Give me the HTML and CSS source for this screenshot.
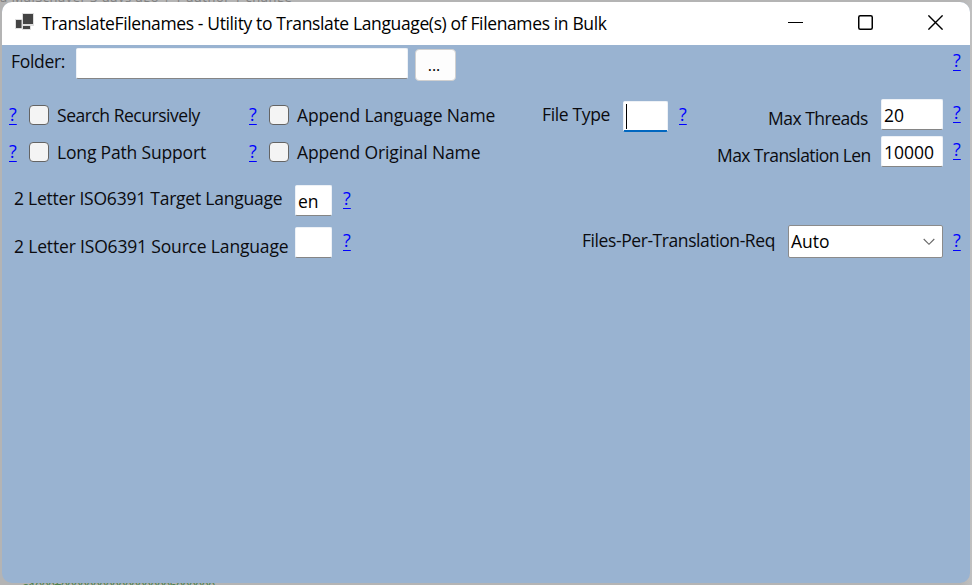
FILE: index.html
```html
<!DOCTYPE html>
<html lang="en">
<head>
<meta charset="utf-8">
<title>TranslateFilenames</title>
<link rel="stylesheet" href="styles.css">
</head>
<body>
<div class="behind behind-top">a MalSchaver 3 days ago | 1 author 1 change</div>
<div class="behind behind-bottom">a1000f00000000000000000b000000</div>
<div class="window">
  <header class="titlebar">
    <svg class="app-icon" width="20" height="18" viewBox="0 0 20 18"><path fill="#dedede" d="M7 0h12v13h-3v4H7v-1H0V6h7z"/><path fill="#444" d="M8 1h10v10H8zM1 7h5.5v8H1zM8 13h7v3H8z"/></svg>
    <h1 class="title">TranslateFilenames - Utility to Translate Language(s) of Filenames in Bulk</h1>
    <div class="controls">
      <svg width="15" height="15" viewBox="0 0 15 15"><path d="M0 7.5h15"/></svg>
      <svg width="15" height="15" viewBox="0 0 15 15"><rect x=".75" y=".75" width="13.5" height="13.5" rx="1.5" stroke-width="1.5"/></svg>
      <svg width="15" height="15" viewBox="0 0 15 15"><path stroke-width="1.4" d="M.4.4l14.2 14.2M14.6.4L.4 14.6"/></svg>
    </div>
  </header>
  <main class="form">
    <div class="row row-folder">
      <label class="label folder-label">Folder:</label>
      <div class="field folder-input"></div>
      <button class="browse">...</button>
      <a class="help" href="#">?</a>
    </div>
    <div class="row row-options">
      <div class="options">
        <a class="help" href="#">?</a><span class="check"></span><label class="label search">Search Recursively</label>
        <a class="help" href="#">?</a><span class="check"></span><label class="label append-lang">Append Language Name</label>
        <a class="help" href="#">?</a><span class="check"></span><label class="label long-path">Long Path Support</label>
        <a class="help" href="#">?</a><span class="check"></span><label class="label append-orig">Append Original Name</label>
      </div>
      <div class="filetype">
        <label class="label filetype-label">File Type</label>
        <div class="field focused"><span class="caret"></span></div>
        <a class="help" href="#">?</a>
      </div>
      <div class="limits">
        <label class="label threads">Max Threads</label><div class="field">20</div><a class="help" href="#">?</a>
        <label class="label length">Max Translation Len</label><div class="field">10000</div><a class="help" href="#">?</a>
      </div>
    </div>
    <div class="row row-target">
      <label class="label target-label">2 Letter ISO6391 Target Language</label>
      <div class="field lang-input">en</div>
      <a class="help" href="#">?</a>
    </div>
    <div class="row row-source">
      <label class="label source-label">2 Letter ISO6391 Source Language</label>
      <div class="field lang-input"></div>
      <a class="help" href="#">?</a>
      <div class="batch">
        <label class="label batch-label">Files-Per-Translation-Req</label>
        <div class="select">Auto<svg width="12" height="8" viewBox="0 0 12 8"><path d="M.7 1l5.3 5.3L11.3 1"/></svg></div>
        <a class="help" href="#">?</a>
      </div>
    </div>
  </main>
</div>
</body>
</html>
```
FILE: styles.css
```css
* { box-sizing: border-box; }

body {
  margin: 0;
  height: 585px;
  overflow: hidden;
  padding: 2px;
  background: linear-gradient(90deg, #b4b4b4 0 960px, #c0c0c0 972px);
  font: 17.5px/24px "Open Sans", "Noto Sans", sans-serif;
  color: #0b0b0f;
}

.behind { position: absolute; left: 0; white-space: pre; font-size: 13px; line-height: 18px; }
.behind-top { top: -12px; color: #808080; letter-spacing: 0.48px; }
.behind-bottom { top: 579px; left: 22px; color: #4f7f4f; font: 13px/18px "Liberation Mono", monospace; letter-spacing: -1.4px; }

.window {
  position: relative;
  height: 581px;
  border-radius: 10px;
  overflow: hidden;
  background: #99b3d1;
}

.titlebar {
  display: flex;
  height: 43px;
  background: #fff;
  padding-left: 13px;
}
.app-icon { margin-top: 11px; }
.title {
  margin: 9px 0 0 7px;
  font-size: 17.5px;
  font-weight: 400;
  letter-spacing: -0.37px;
  color: #000;
  white-space: nowrap;
}
.controls {
  display: flex;
  gap: 55px;
  margin: 13px 27px 0 auto;
}
.controls svg { fill: none; stroke: #000; }

.row { display: flex; align-items: flex-start; }
.row-folder { height: 53px; padding-left: 9px; }
.row-options { height: 85px; }
.row-target { height: 42px; padding-left: 11px; }
.row-source { padding-left: 11px; }

.label { white-space: nowrap; }
.help {
  width: 9px;
  color: #00f;
  font-size: 18px;
  line-height: 22px;
  text-decoration: underline;
  text-decoration-thickness: 1px;
  text-underline-offset: 3px;
}
.row-folder .help { margin: 4px 8px 0 auto; }

.field {
  height: 31px;
  padding: 3px 0 0 2px;
  border: 1px solid #edf1f6;
  border-bottom-color: #858585;
  border-radius: 2px;
  background: #fff;
  color: #000;
}

.folder-label { width: 65px; margin-top: 4px; letter-spacing: -0.3px; }
.folder-input { width: 332px; margin-top: 3px; }
.browse {
  width: 41px;
  height: 32px;
  margin: 4px 0 0 7px;
  padding: 0 3px 0 0;
  border: 1px solid #d0d0d0;
  border-radius: 4px;
  background: #fdfdfd;
  font: inherit;
  font-size: 16px;
  color: #000;
}

.options {
  display: grid;
  grid-template-columns: 9px 31px 200px 9px 31px 214px;
  grid-template-rows: 37px 37px;
  padding: 5px 0 0 7px;
}
.check {
  width: 20px;
  height: 20px;
  border: 1px solid #646464;
  border-radius: 4px;
  background: #f4f4f4;
}
.options .check { margin: 2px 0 0 11px; }
.options .label { margin-left: 8px; }
.search { letter-spacing: -0.47px; }
.long-path { letter-spacing: -0.17px; }
.append-lang { letter-spacing: -0.12px; }
.append-orig { letter-spacing: -0.12px; }

.filetype { display: flex; margin-left: 39px; }
.filetype-label { width: 81px; margin-top: 4px; letter-spacing: -0.35px; }
.focused { width: 45px; height: 31px; margin-top: 3px; padding: 2px 0 0 2px; border-bottom: 2px solid #0067c0; }
.caret { display: block; width: 1px; height: 25px; background: #000; }
.filetype .help { margin: 5px 0 0 11px; }

.limits {
  display: grid;
  grid-template-columns: 164px 62px 19px;
  grid-template-rows: 31px 31px;
  row-gap: 6px;
  margin: 1px 8px 0 auto;
}
.limits .help { margin: 2px 0 0 10px; }
.limits .label { margin-top: 7px; }
.threads { margin-left: 51px; letter-spacing: -0.5px; }
.length { letter-spacing: -0.6px; }

.target-label { width: 281px; margin: 3px 0 0 1px; letter-spacing: -0.23px; }
.source-label { width: 281px; margin: 9px 0 0 1px; letter-spacing: -0.17px; }
.lang-input { width: 37px; margin-top: 2px; }
.row .lang-input + .help { margin: 4px 0 0 11px; }

.batch { display: flex; margin: 0 8px 0 auto; }
.batch-label { width: 206px; margin-top: 3px; letter-spacing: -0.42px; }
.select {
  display: flex;
  justify-content: space-between;
  width: 155px;
  height: 33px;
  padding: 3px 7px 0 2px;
  border: 1px solid #8b8b8b;
  border-radius: 2px;
  background: #fff;
  color: #000;
}
.select svg { margin-top: 9px; fill: none; stroke: #666; stroke-width: 1.1; }
.batch .help { margin: 4px 0 0 10px; }
```
